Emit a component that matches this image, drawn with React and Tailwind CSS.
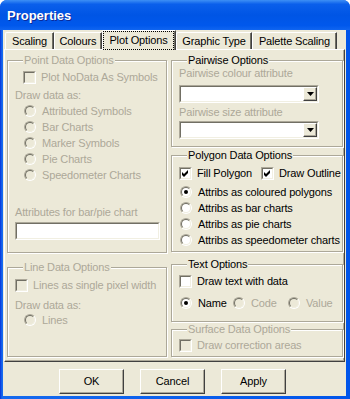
import React from 'react';

// Classic XP "Properties" dialog, Plot Options tab

const Check = ({ checked, disabled }) => (
  <span className="block w-[13px] h-[13px] shrink-0 border border-t-[#ACA899] border-l-[#ACA899] border-b-white border-r-white">
    <span
      className={`flex w-full h-full items-center justify-center border border-t-[#716F64] border-l-[#716F64] border-b-[#F1EFE2] border-r-[#F1EFE2] ${
        disabled ? 'bg-[#ECE9D8]' : 'bg-white'
      }`}
    >
      {checked && (
        <svg width="7" height="7" viewBox="0 0 7 7">
          <path d="M0 2 L2 4 L6 0 L6 3 L2 7 L0 5 Z" fill="#000" />
        </svg>
      )}
    </span>
  </span>
);

const Radio = ({ checked, disabled }) => (
  <span className="block w-[12px] h-[12px] shrink-0 rounded-full border border-t-[#ACA899] border-l-[#ACA899] border-b-white border-r-white">
    <span
      className={`flex w-full h-full items-center justify-center rounded-full border border-t-[#716F64] border-l-[#716F64] border-b-[#F1EFE2] border-r-[#F1EFE2] ${
        disabled ? 'bg-[#ECE9D8]' : 'bg-white'
      }`}
    >
      {checked && <span className="block w-[4px] h-[4px] rounded-full bg-black" />}
    </span>
  </span>
);

const Label = ({ disabled, children }) => (
  <span className={`whitespace-nowrap ${disabled ? 'text-[#ACA899]' : 'text-black'}`}>{children}</span>
);

const CheckRow = ({ label, checked, disabled, className = '' }) => (
  <div className={`h-[14px] flex items-center gap-[5px] ${className}`}>
    <Check checked={checked} disabled={disabled} />
    <Label disabled={disabled}>{label}</Label>
  </div>
);

const RadioRow = ({ label, checked, disabled, className = '' }) => (
  <div className={`flex items-center gap-[6px] ${className}`}>
    <Radio checked={checked} disabled={disabled} />
    <Label disabled={disabled}>{label}</Label>
  </div>
);

const Group = ({ title, disabled, className = '', children }) => (
  <fieldset
    className={`border border-[#ACA899] shadow-[inset_1px_1px_0_#fff,1px_1px_0_#fff] pl-[7px] ${className}`}
  >
    <legend
      className={`ml-[8px] px-[1px] leading-[13px] bg-[#ECE9D8] ${disabled ? 'text-[#ACA899]' : 'text-black'}`}
    >
      {title}
    </legend>
    {children}
  </fieldset>
);

const Combo = ({ className = '' }) => (
  <div className={`w-[140px] h-[18px] border border-t-[#ACA899] border-l-[#ACA899] border-b-white border-r-white ${className}`}>
    <div className="h-full flex justify-end bg-white border border-t-[#716F64] border-l-[#716F64] border-b-[#F1EFE2] border-r-[#F1EFE2]">
      <div className="w-[14px] h-full flex items-center justify-center bg-[#ECE9D8] border border-t-white border-l-white border-b-[#404040] border-r-[#404040] shadow-[inset_-1px_-1px_0_#ACA899]">
        <svg width="7" height="4" viewBox="0 0 7 4">
          <path d="M0 0 H7 L3.5 4 Z" fill="#000" />
        </svg>
      </div>
    </div>
  </div>
);

const tabs = [
  { label: 'Scaling', w: 'w-[49px]' },
  { label: 'Colours', w: 'w-[48px]' },
  { label: 'Plot Options', w: 'w-[74px]', active: true },
  { label: 'Graphic Type', w: 'w-[76px]' },
  { label: 'Palette Scaling', w: 'w-[85px]' },
];

const Tab = ({ label, w, active }) =>
  active ? (
    <div
      className={`${w} h-[20px] mb-[-1px] relative z-10 flex flex-col bg-[#ECE9D8] border-t border-l border-r border-t-white border-l-white border-r-[#404040] rounded-tl-[2px] shadow-[inset_-1px_0_0_#716F64]`}
    >
      <div className="flex-1 mb-[2px] mr-[1px] flex items-center justify-center border border-dotted border-black">
        {label}
      </div>
    </div>
  ) : (
    <div
      className={`${w} h-[17px] flex items-center justify-center bg-[#ECE9D8] border-t border-l border-r border-t-white border-l-white border-r-[#404040] rounded-tl-[2px] shadow-[inset_-1px_0_0_#716F64]`}
    >
      {label}
    </div>
  );

const Button = ({ children }) => (
  <button className="w-[65px] h-[25px] bg-[#ECE9D8] text-black border border-t-white border-l-white border-b-[#404040] border-r-[#404040] shadow-[inset_-1px_-1px_0_#ACA899]">
    {children}
  </button>
);

export default function App() {
  return (
    <div className="w-[350px] h-[399px] bg-white">
      <div className="w-full h-full flex flex-col rounded-t-[7px] overflow-hidden bg-[#0055EA] font-['Liberation_Sans',Arial,sans-serif] text-[11px] tracking-[-0.15px] text-black">
        {/* Title bar */}
        <div className="h-[30px] shrink-0 flex items-center pl-[7px] pt-[1px] bg-[linear-gradient(180deg,#3D8FF5_0%,#0A5FEB_14%,#0055E5_50%,#0058EC_85%,#1065F0_100%)]">
          <span className="text-white font-bold text-[13px] tracking-normal [text-shadow:1px_1px_0_#0A2A9A]">
            Properties
          </span>
        </div>

        {/* Frame */}
        <div className="flex-1 flex flex-col pl-[3px] pr-[4px] pb-[3px] bg-[linear-gradient(90deg,#0831D9_0px,#166AEE_2px,#0055EA_100%)]">
          <div className="flex-1 flex flex-col bg-[#ECE9D8]">
            {/* Tabs */}
            <div className="h-[19px] flex items-end pl-[2px]">
              {tabs.map((t) => (
                <Tab key={t.label} {...t} />
              ))}
            </div>

            {/* Tab panel */}
            <div className="h-[313px] mx-[1px] flex gap-[4px] pl-[2px] pt-[4px] border border-t-white border-l-white border-r-[#404040] border-b-[#404040] shadow-[inset_-1px_-1px_0_#ACA899]">
              {/* Left column */}
              <div className="w-[160px] flex flex-col">
                <Group title="Point Data Options" disabled className="h-[199px]">
                  <CheckRow label="Plot NoData As Symbols" disabled className="mt-[3px] ml-[8px]" />
                  <div className="mt-[4px] h-[14px] flex items-center">
                    <Label disabled>Draw data as:</Label>
                  </div>
                  <div className="mt-[1px] flex flex-col">
                    {['Attributed Symbols', 'Bar Charts', 'Marker Symbols', 'Pie Charts', 'Speedometer Charts'].map((l) => (
                      <RadioRow key={l} label={l} disabled className="h-[16px] ml-[9px]" />
                    ))}
                  </div>
                  <div className="mt-[22px] h-[14px] flex items-center">
                    <Label disabled>Attributes for bar/pie chart</Label>
                  </div>
                  <div className="mt-[3px] w-[145px] h-[18px] border border-t-[#ACA899] border-l-[#ACA899] border-b-white border-r-white">
                    <div className="h-full bg-white border border-t-[#716F64] border-l-[#716F64] border-b-[#F1EFE2] border-r-[#F1EFE2]" />
                  </div>
                </Group>

                <Group title="Line Data Options" disabled className="mt-[8px] h-[96px]">
                  <CheckRow label="Lines as single pixel width" disabled className="mt-[4px]" />
                  <div className="mt-[6px] h-[14px] flex items-center">
                    <Label disabled>Draw data as:</Label>
                  </div>
                  <RadioRow label="Lines" disabled className="h-[16px] ml-[9px]" />
                </Group>
              </div>

              {/* Right column */}
              <div className="w-[172px] flex flex-col">
                <Group title="Pairwise Options" className="h-[93px]">
                  <div className="h-[13px] flex items-center">
                    <Label disabled>Pairwise colour attribute</Label>
                  </div>
                  <Combo className="mt-[5px]" />
                  <div className="mt-[3px] h-[13px] flex items-center">
                    <Label disabled>Pairwise size attribute</Label>
                  </div>
                  <Combo className="mt-[2px]" />
                </Group>

                <Group title="Polygon Data Options" className="mt-[2px] h-[103px]">
                  <div className="mt-[4px] flex">
                    <CheckRow label="Fill Polygon" checked className="w-[82px]" />
                    <CheckRow label="Draw Outline" checked />
                  </div>
                  <div className="mt-[4px] flex flex-col">
                    <RadioRow label="Attribs as coloured polygons" checked className="h-[16px] ml-[1px]" />
                    <RadioRow label="Attribs as bar charts" className="h-[16px] ml-[1px]" />
                    <RadioRow label="Attribs as pie charts" className="h-[16px] ml-[1px]" />
                    <RadioRow label="Attribs as speedometer charts" className="h-[16px] ml-[1px]" />
                  </div>
                </Group>

                <Group title="Text Options" className="mt-[6px] h-[64px]">
                  <CheckRow label="Draw text with data" className="mt-[3px]" />
                  <div className="mt-[8px] h-[14px] ml-[1px] flex">
                    <RadioRow label="Name" checked className="w-[53px]" />
                    <RadioRow label="Code" disabled className="w-[55px]" />
                    <RadioRow label="Value" disabled />
                  </div>
                </Group>

                <Group title="Surface Data Options" disabled className="mt-[1px] h-[34px]">
                  <CheckRow label="Draw correction areas" disabled className="mt-[2px]" />
                </Group>
              </div>
            </div>

            {/* Buttons */}
            <div className="pt-[7px] pl-[56px] flex gap-[16px]">
              <Button>OK</Button>
              <Button>Cancel</Button>
              <Button>Apply</Button>
            </div>
          </div>
        </div>
      </div>
    </div>
  );
}
